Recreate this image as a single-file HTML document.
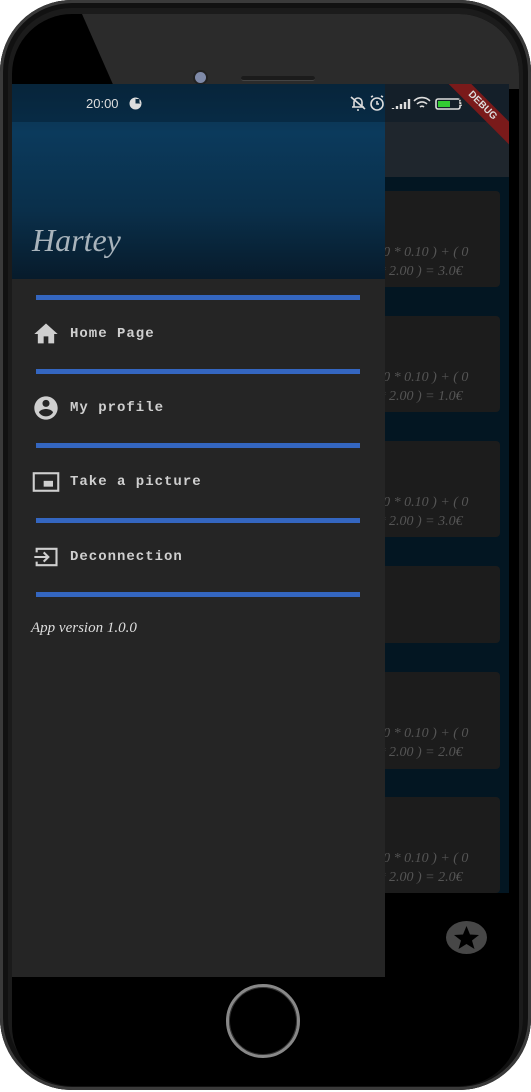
<!DOCTYPE html>
<html><head><meta charset="utf-8"><style>
*{margin:0;padding:0;box-sizing:border-box}
body{width:531px;height:1092px;background:#fff;position:relative;overflow:hidden;font-family:"Liberation Sans",sans-serif}
.phone{position:absolute;left:0;top:0;width:531px;height:1090px;background:#1b1b1b;border-radius:72px;box-shadow:inset 0 0 0 3px #3a3a3a,inset 0 0 0 8px #111}
.bezel{position:absolute;left:12px;top:14px;width:507px;height:1072px;background:#000;border-radius:60px;overflow:hidden}
.tri{position:absolute;left:0;top:0;width:507px;height:75px;background:#2b2b2b;clip-path:polygon(70px 0,507px 0,507px 75px,103px 75px)}
.cam{position:absolute;left:183px;top:58px;width:11px;height:11px;border-radius:50%;background:#7f8aa8;box-shadow:0 0 0 2px #222}
.spk{position:absolute;left:229px;top:62px;width:74px;height:5px;border-radius:3px;background:#1b1b1b;border-bottom:1px solid #444}
.screen{position:absolute;left:12px;top:84px;width:497px;height:893px;background:#031622;overflow:hidden}
.appbar{position:absolute;left:0;top:0;width:497px;height:93px;background:#1f262d}
.card{position:absolute;left:366px;width:122px;background:#1c1c1c;border-radius:4px;color:#555;font-family:"Liberation Serif",serif;font-style:italic;font-size:14px;line-height:19px;overflow:hidden;white-space:nowrap}
.card span{position:absolute;left:-3px;top:52px}
.bot{position:absolute;left:0;top:809px;width:497px;height:84px;background:#000}
.star{position:absolute;left:434px;top:837px;width:41px;height:33px;border-radius:50%;background:#474747}
.drawer{position:absolute;left:0;top:0;width:373px;height:893px;background:#252525}
.head{position:absolute;left:0;top:0;width:373px;height:195px;background:linear-gradient(180deg,#0c2e48 0%,#0b3a5c 25%,#0a2f4a 65%,#071b2b 100%)}
.sb{position:absolute;left:0;top:0;width:497px;height:38px;background:rgba(0,20,35,.35);color:#ddd;font-size:13px}
.hartey{position:absolute;left:20px;top:138px;font-family:"Liberation Serif",serif;font-style:italic;font-size:32px;color:#a9b4bc}
.line{position:absolute;left:24px;width:324px;height:5px;background:#3466c0}
.item{position:absolute;left:20px;height:30px;display:flex;align-items:center;color:#cfcfcf;font-family:"Liberation Mono",monospace;font-weight:bold;font-size:14px;letter-spacing:1px}
.item svg{width:28px;height:28px;margin-right:10px}
.ver{position:absolute;left:19px;top:536px;font-family:"Liberation Serif",serif;font-style:italic;font-size:15px;color:#ddd}
.home{position:absolute;left:226px;top:984px;width:74px;height:74px;border-radius:50%;border:3px solid #888;box-shadow:inset 0 0 0 1px #333}
.debug{position:absolute;right:-28px;top:14px;width:110px;height:16px;background:#7a1a1a;color:#ddd;font-size:10px;font-weight:bold;text-align:center;line-height:16px;transform:rotate(45deg)}
</style></head><body>
<div class="phone"><div class="bezel"><div class="tri"></div><div class="cam"></div><div class="spk"></div></div></div>
<div class="screen">
 <div class="appbar"></div>
 <div class="card" style="top:107px;height:96px"><span>( 0 * 0.10 ) + ( 0<br>&nbsp;* 2.00 ) = 3.0€</span></div>
 <div class="card" style="top:232px;height:96px"><span>( 0 * 0.10 ) + ( 0<br>&nbsp;* 2.00 ) = 1.0€</span></div>
 <div class="card" style="top:357px;height:96px"><span>( 0 * 0.10 ) + ( 0<br>&nbsp;* 2.00 ) = 3.0€</span></div>
 <div class="card" style="top:482px;height:77px"></div>
 <div class="card" style="top:588px;height:97px"><span>( 0 * 0.10 ) + ( 0<br>&nbsp;* 2.00 ) = 2.0€</span></div>
 <div class="card" style="top:713px;height:96px"><span>( 0 * 0.10 ) + ( 0<br>&nbsp;* 2.00 ) = 2.0€</span></div>
 <div class="bot"></div>
 <div class="star"><svg width="41" height="33" viewBox="0 0 41 33"><polygon points="20.5,5 24,13.5 33,14 26,19.5 28.5,28 20.5,23 12.5,28 15,19.5 8,14 17,13.5" fill="#000"/></svg></div>
 <div class="drawer">
  <div class="head"></div>
  <div class="hartey">Hartey</div>
  <div class="line" style="top:211px"></div>
  <div class="item" style="top:235px"><svg viewBox="0 0 24 24"><path d="M10 20v-6h4v6h5v-8h3L12 3 2 12h3v8z" fill="#cfcfcf"/></svg>Home Page</div>
  <div class="line" style="top:285px"></div>
  <div class="item" style="top:309px"><svg viewBox="0 0 24 24"><path d="M12 2C6.5 2 2 6.5 2 12s4.5 10 10 10 10-4.5 10-10S17.5 2 12 2zm0 3c1.7 0 3 1.3 3 3s-1.3 3-3 3-3-1.3-3-3 1.3-3 3-3zm0 14.2c-2.5 0-4.7-1.3-6-3.2 0-2 4-3.1 6-3.1s6 1.1 6 3.1c-1.3 1.9-3.5 3.2-6 3.2z" fill="#cfcfcf"/></svg>My profile</div>
  <div class="line" style="top:359px"></div>
  <div class="item" style="top:383px"><svg viewBox="0 0 24 24"><rect x="1.5" y="4.5" width="21" height="15" fill="none" stroke="#cfcfcf" stroke-width="1.8"/><rect x="10" y="11" width="8" height="5" fill="#cfcfcf"/></svg>Take a picture</div>
  <div class="line" style="top:434px"></div>
  <div class="item" style="top:458px"><svg viewBox="0 0 24 24"><path d="M4 8V5h17v14H4v-3" fill="none" stroke="#cfcfcf" stroke-width="1.8"/><path d="M2 12h12M10 8l4 4-4 4" fill="none" stroke="#cfcfcf" stroke-width="1.8"/></svg>Deconnection</div>
  <div class="line" style="top:508px"></div>
  <div class="ver">App version 1.0.0</div>
 </div>
 <div class="sb"><span style="position:absolute;left:74px;top:12px">20:00</span>
  <svg style="position:absolute;left:117px;top:13px" width="13" height="13" viewBox="0 0 13 13"><circle cx="6.5" cy="6.5" r="6" fill="#ddd"/><path d="M6.5 1.5v5h5" fill="#0b2a40"/><rect x="6.5" y="2" width="4" height="4" fill="#0b2a40"/></svg>
  <svg style="position:absolute;left:337px;top:10px" width="140" height="18" viewBox="0 0 140 18" fill="none" stroke="#ddd" stroke-width="1.6">
   <path d="M3 13h12M5 13V8a4 4 0 018 0v5M8 16h2M2 3l14 12"/>
   <circle cx="28" cy="10" r="6"/><path d="M28 7v3h2M22 3l2-1M34 3l-2-1"/>
   <path d="M44 15v-1M48 15v-3M52 15v-5M56 15v-7M60 15v-10" stroke-width="2.4"/>
   <path d="M65 7a11 11 0 0116 0M68 10a7 7 0 0110 0M71 13a3 3 0 014 0"/>
   <rect x="87" y="5" width="24" height="10" rx="2"/><rect x="89" y="7" width="12" height="6" fill="#3c3" stroke="none"/><path d="M112 8v4"/>
  </svg>
  <span style="position:absolute;left:446px;top:14px;font-size:8px;color:#222">37</span>
  <div class="debug">DEBUG</div></div>
</div>
<div class="home"></div>
</body></html>
